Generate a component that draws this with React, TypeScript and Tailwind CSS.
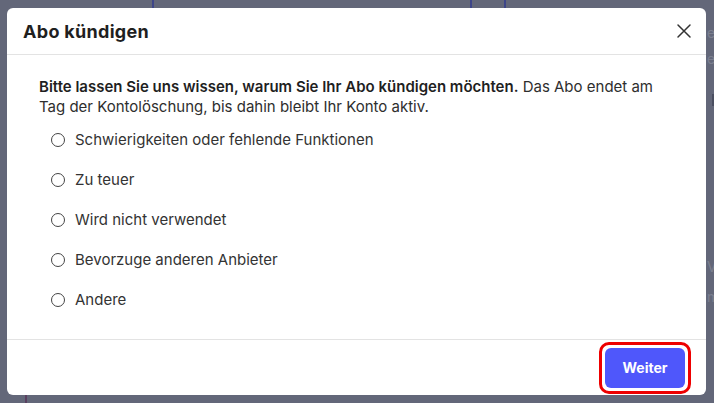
import React from "react";

const reasons = [
  "Schwierigkeiten oder fehlende Funktionen",
  "Zu teuer",
  "Wird nicht verwendet",
  "Bevorzuge anderen Anbieter",
  "Andere",
];

export default function App() {
  return (
    <div
      className="relative w-[714px] h-[403px] overflow-hidden bg-[#636779] pl-[7px] pt-[8px]"
      style={{ fontFamily: 'Inter, "Noto Sans", sans-serif' }}
    >
      {/* faint background content behind overlay */}
      <div className="absolute top-0 left-[152px] w-[2px] h-[8px] bg-[#3d4588]" />
      <div className="absolute top-0 left-[470px] w-[2px] h-[8px] bg-[#3d4588]" />
      <div className="absolute top-0 left-[504px] w-[2px] h-[8px] bg-[#3d4588]" />
      <div className="absolute bottom-0 left-[25px] w-[2px] h-[8px] bg-[#5a4060]" />
      <div className="absolute top-[22px] left-[707px] w-[7px] overflow-hidden text-[14px] text-[#7c8090]">es</div>
      <div className="absolute top-[48px] left-[707px] w-[7px] overflow-hidden text-[14px] text-[#7c8090]">es</div>
      <div className="absolute top-[94px] left-[712px] w-[2px] h-[12px] bg-[#4a4e60]" />
      <div className="absolute top-[256px] left-[707px] w-[7px] overflow-hidden text-[14px] text-[#7c8090]">V</div>
      <div className="absolute top-[286px] left-[707px] w-[7px] overflow-hidden text-[14px] text-[#7c8090]">m</div>

      {/* modal */}
      <div className="relative w-[699px] h-[387px] bg-white rounded-[6px] flex flex-col">
        <div className="h-[47px] flex items-center justify-between pl-[16px] pr-[14px] border-b border-[#e3e3e3]">
          <h2 className="text-[18px] font-bold tracking-[0.3px] text-[#1f1f1f]">Abo kündigen</h2>
          <svg width="16" height="16" viewBox="0 0 16 16" className="text-[#333]">
            <path d="M2 2 L14 14 M14 2 L2 14" stroke="currentColor" strokeWidth="1.5" strokeLinecap="round" />
          </svg>
        </div>
        <div className="flex-1 pl-[32px] pr-[32px] pt-[22px]">
          <p className="text-[15px] leading-[20px] text-[#2e2e2e]">
            <span className="font-semibold text-[#1f1f1f]">Bitte lassen Sie uns wissen, warum Sie Ihr Abo kündigen möchten.</span>{" "}
            Das Abo endet am Tag der Kontolöschung, bis dahin bleibt Ihr Konto aktiv.
          </p>
          <div className="mt-[3px] flex flex-col">
            {reasons.map((r) => (
              <label key={r} className="h-[40px] flex items-center pl-[12px] gap-[10px]">
                <span className="w-[14px] h-[14px] rounded-full border border-[#444] bg-white" />
                <span className="text-[15px] text-[#333]">{r}</span>
              </label>
            ))}
          </div>
        </div>
        <div className="h-[56px] border-t border-[#e3e3e3] flex items-center justify-end pr-[15px]">
          <div className="rounded-[10px] border-[3px] border-[#ee0000] p-[3px]">
            <button className="w-[80px] h-[40px] rounded-[6px] bg-[#4f57fb] text-white text-[14px] font-bold">
              Weiter
            </button>
          </div>
        </div>
      </div>
    </div>
  );
}
